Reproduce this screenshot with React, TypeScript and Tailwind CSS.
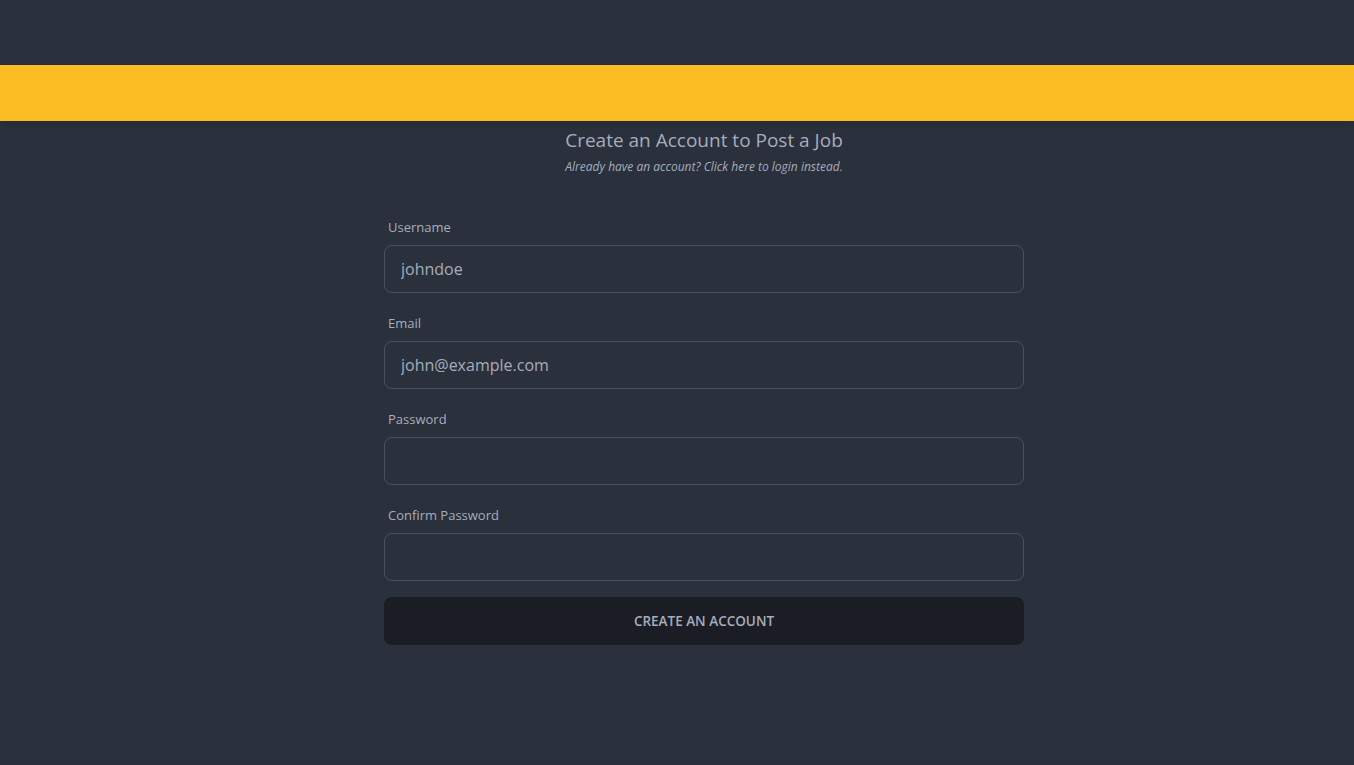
import React, { useState } from 'react';

const fields = [
  { label: 'Username', type: 'text', placeholder: 'johndoe' },
  { label: 'Email', type: 'email', placeholder: 'john@example.com' },
  { label: 'Password', type: 'password', placeholder: '' },
  { label: 'Confirm Password', type: 'password', placeholder: '' },
];

const App: React.FC = () => {
  const [values, setValues] = useState<string[]>(['', '', '', '']);

  const update = (i: number, v: string) => {
    const next = [...values];
    next[i] = v;
    setValues(next);
  };

  return (
    <div
      className="min-h-screen bg-[#2a303c] text-[#a6adbb]"
      style={{ fontFamily: '"Open Sans", "Noto Sans", sans-serif' }}
    >
      <div className="h-[65px]" />
      <div className="h-14 bg-[#fbbd23] shadow-md" />

      <div className="flex flex-col items-center pt-[5px] pl-[54px]">
        <h1 className="text-[19px] leading-7">Create an Account to Post a Job</h1>
        <p className="text-xs italic leading-4 mt-[5px]">
          Already have an account? Click here to login instead.
        </p>

        <form className="w-[640px] mt-[34px] flex flex-col" onSubmit={(e) => e.preventDefault()}>
          {fields.map((f, i) => (
            <div key={f.label} className="flex flex-col mb-3">
              <label className="px-1 py-2 text-[13px] leading-5">{f.label}</label>
              <input
                type={f.type}
                value={values[i]}
                onChange={(e) => update(i, e.target.value)}
                placeholder={f.placeholder}
                className="h-12 px-4 rounded-lg border border-[#4a505c] bg-[#2a303c] text-base text-[#a6adbb] placeholder:text-[#a6adbb] focus:outline-none"
              />
            </div>
          ))}
          <button
            type="submit"
            className="mt-1 h-12 rounded-lg bg-[#1a1d24] text-[13.5px] font-semibold uppercase text-[#a6adbb]"
          >
            Create an Account
          </button>
        </form>
      </div>
    </div>
  );
};

export default App;
